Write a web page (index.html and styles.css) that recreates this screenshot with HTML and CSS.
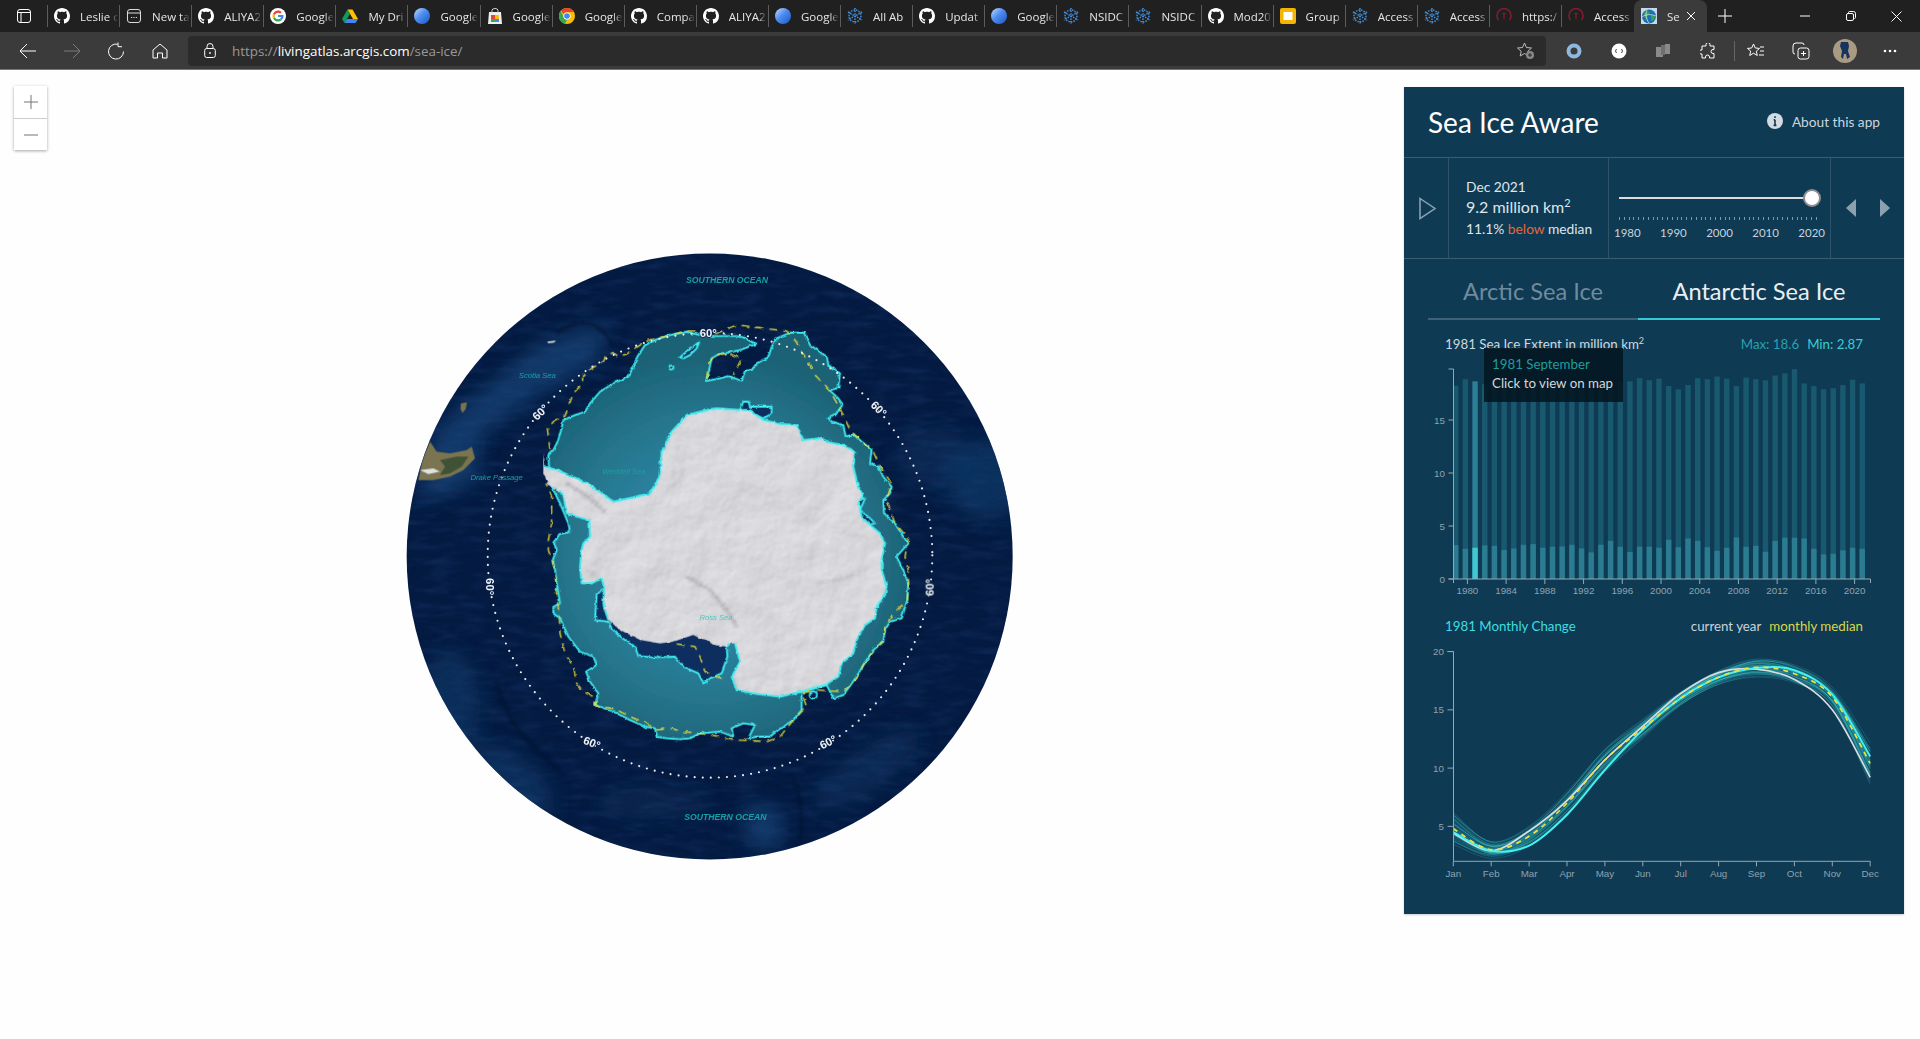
FILE: index.html
```html
<!DOCTYPE html>
<html lang="en">
<head>
  <meta charset="UTF-8" />
  <title>Sea Ice Aware</title>
  <link rel="stylesheet" href="styles.css">
</head>
<body>
  <svg class="icon-defs" aria-hidden="true">
    <defs>
      <symbol id="i-gh" viewBox="0 0 16 16"><path fill="#fff" d="M8 0C3.58 0 0 3.58 0 8c0 3.54 2.29 6.53 5.47 7.59.4.07.55-.17.55-.38 0-.19-.01-.82-.01-1.49-2.01.37-2.53-.49-2.69-.94-.09-.23-.48-.94-.82-1.13-.28-.15-.68-.52-.01-.53.63-.01 1.08.58 1.23.82.72 1.21 1.87.87 2.33.66.07-.52.28-.87.51-1.07-1.78-.2-3.64-.89-3.64-3.95 0-.87.31-1.59.82-2.15-.08-.2-.36-1.02.08-2.12 0 0 .67-.21 2.2.82.64-.18 1.32-.27 2-.27.68 0 1.36.09 2 .27 1.53-1.04 2.2-.82 2.2-.82.44 1.1.16 1.92.08 2.12.51.56.82 1.27.82 2.15 0 3.07-1.87 3.75-3.65 3.95.29.25.54.73.54 1.48 0 1.07-.01 1.93-.01 2.2 0 .21.15.46.55.38A8.013 8.013 0 0016 8c0-4.42-3.58-8-8-8z"/></symbol>
      <symbol id="i-new" viewBox="0 0 16 16"><rect x="1.5" y="1.5" width="13" height="13" rx="2.5" fill="none" stroke="#ddd"/><path d="M2 5h12" stroke="#ddd"/><path d="M5 9.500h1.200M7.400 9.500h1.200M9.800 9.500h1.200" stroke="#ddd"/></symbol>
      <symbol id="i-google" viewBox="0 0 16 16"><circle cx="8" cy="8" r="8" fill="#fff"/><path fill="#4285f4" d="M13.500 8.100c0-.4 0-.8-.1-1.100H8v2.100h3.100c-.1.700-.5 1.300-1.100 1.700l1.700 1.300c1-.9 1.800-2.300 1.800-4z"/><path fill="#34a853" d="M8 13.600c1.500 0 2.700-.5 3.700-1.400L10 10.800c-.5.300-1.200.5-2 .5-1.500 0-2.700-1-3.100-2.300l-1.800 1.400c.9 1.800 2.800 3.200 4.900 3.200z"/><path fill="#fbbc05" d="M4.900 9c-.2-.7-.2-1.400 0-2L3.100 5.600c-.8 1.500-.8 3.300 0 4.800z"/><path fill="#ea4335" d="M8 4.700c.8 0 1.600.3 2.200.9l1.600-1.600C10.800 3 9.500 2.400 8 2.400c-2.100 0-4 1.300-4.900 3.200L4.900 7C5.300 5.700 6.500 4.700 8 4.700z"/></symbol>
      <symbol id="i-drive" viewBox="0 0 16 16"><path fill="#ffc107" d="M5.500 1.500h5L16 11h-5z"/><path fill="#0f9d58" d="M5.500 1.500L0 11l2.500 4L8 6z"/><path fill="#4285f4" d="M5 11h11l-2.500 4h-11z"/></symbol>
      <symbol id="i-globe" viewBox="0 0 16 16"><defs><linearGradient id="g-blue" x1="0" y1="0" x2="1" y2="1"><stop offset="0" stop-color="#c6ddff"/><stop offset=".45" stop-color="#4d8df0"/><stop offset="1" stop-color="#1a56c4"/></linearGradient></defs><circle cx="8" cy="8" r="8" fill="url(#g-blue)"/></symbol>
      <symbol id="i-store" viewBox="0 0 16 16"><path fill="#eee" d="M2 4h12l1 12H1z"/><path d="M5 5V2.500a3 2 0 016 0V5" fill="none" stroke="#ccc"/><path fill="#ea4335" d="M4 7h4v4H4z"/><path fill="#fbbc05" d="M8 7h4v4H8z"/><path fill="#34a853" d="M4 11h4v3H4z"/><path fill="#4285f4" d="M8 11h4v3H8z"/></symbol>
      <symbol id="i-chrome" viewBox="0 0 16 16"><circle cx="8" cy="8" r="8" fill="#fbbc05"/><path fill="#ea4335" d="M8 0a8 8 0 017 4H8a4 4 0 00-3.500 2L2 2.500A8 8 0 018 0z"/><path fill="#34a853" d="M1.500 3l3 5.500A4 4 0 008 12l-2.300 3.700A8 8 0 011.500 3z"/><circle cx="8" cy="8" r="3.600" fill="#fff"/><circle cx="8" cy="8" r="2.800" fill="#4285f4"/></symbol>
      <symbol id="i-nsidc" viewBox="0 0 16 16"><g fill="none" stroke="#3f8fdc" stroke-width="1.500" stroke-dasharray="1.500 1.100"><path d="M8 0v16M1 4l14 8M15 4L1 12"/><circle cx="8" cy="8" r="6"/></g></symbol>
      <symbol id="i-red" viewBox="0 0 16 16"><path d="M2.500 12A7 7 0 1113.500 12" fill="none" stroke="#8e1b33" stroke-width="1.400"/><path d="M8 5v6M6.500 5.500h3" stroke="#8e1b33" stroke-width="1.200"/></symbol>
      <symbol id="i-group" viewBox="0 0 16 16"><rect width="16" height="16" rx="2" fill="#f4b400"/><rect x="3.500" y="4" width="9" height="8" fill="#fff"/></symbol>
      <symbol id="i-world" viewBox="0 0 16 16"><rect width="16" height="16" fill="#c6d9e8"/><circle cx="8" cy="8.500" r="7" fill="#1b6fb5"/><path fill="#3aa34a" d="M3 5l4-2 2 2-3 3 1 4-3-2zM10 7l4 1-1 4-3 1z"/><path d="M1 9c4-3 9-3 14-1M6 2c-2 4-1 9 2 13" fill="none" stroke="#e8f0e0" stroke-width=".7"/></symbol>
    </defs>
  </svg>

  <header class="chrome">
    <div class="tabstrip">
      <div class="strip-btn">
        <svg width="16" height="16" viewBox="0 0 16 16" class="line-icon"><rect x="1.500" y="1.500" width="13" height="13" rx="2.500"/><path d="M1.500 4.500h13M5 4.500v10"/></svg>
      </div>
      <div class="tab"><svg class="favicon"><use href="#i-gh"/></svg><span class="tab-title">Leslie c</span></div>
      <div class="tab"><svg class="favicon"><use href="#i-new"/></svg><span class="tab-title">New ta</span></div>
      <div class="tab"><svg class="favicon"><use href="#i-gh"/></svg><span class="tab-title">ALIYA2</span></div>
      <div class="tab"><svg class="favicon"><use href="#i-google"/></svg><span class="tab-title">Google</span></div>
      <div class="tab"><svg class="favicon"><use href="#i-drive"/></svg><span class="tab-title">My Dri</span></div>
      <div class="tab"><svg class="favicon"><use href="#i-globe"/></svg><span class="tab-title">Google</span></div>
      <div class="tab"><svg class="favicon"><use href="#i-store"/></svg><span class="tab-title">Google</span></div>
      <div class="tab"><svg class="favicon"><use href="#i-chrome"/></svg><span class="tab-title">Google</span></div>
      <div class="tab"><svg class="favicon"><use href="#i-gh"/></svg><span class="tab-title">Compa</span></div>
      <div class="tab"><svg class="favicon"><use href="#i-gh"/></svg><span class="tab-title">ALIYA2</span></div>
      <div class="tab"><svg class="favicon"><use href="#i-globe"/></svg><span class="tab-title">Google</span></div>
      <div class="tab"><svg class="favicon"><use href="#i-nsidc"/></svg><span class="tab-title">All Ab</span></div>
      <div class="tab"><svg class="favicon"><use href="#i-gh"/></svg><span class="tab-title">Updat</span></div>
      <div class="tab"><svg class="favicon"><use href="#i-globe"/></svg><span class="tab-title">Google</span></div>
      <div class="tab"><svg class="favicon"><use href="#i-nsidc"/></svg><span class="tab-title">NSIDC</span></div>
      <div class="tab"><svg class="favicon"><use href="#i-nsidc"/></svg><span class="tab-title">NSIDC</span></div>
      <div class="tab"><svg class="favicon"><use href="#i-gh"/></svg><span class="tab-title">Mod20</span></div>
      <div class="tab"><svg class="favicon"><use href="#i-group"/></svg><span class="tab-title">Group</span></div>
      <div class="tab"><svg class="favicon"><use href="#i-nsidc"/></svg><span class="tab-title">Access</span></div>
      <div class="tab"><svg class="favicon"><use href="#i-nsidc"/></svg><span class="tab-title">Access</span></div>
      <div class="tab"><svg class="favicon"><use href="#i-red"/></svg><span class="tab-title">https:/</span></div>
      <div class="tab"><svg class="favicon"><use href="#i-red"/></svg><span class="tab-title">Access</span></div>
      <div class="tab tab-active">
        <svg class="favicon"><use href="#i-world"/></svg><span class="tab-title tab-title-short">Se</span>
        <svg width="10" height="10" viewBox="0 0 10 10" class="line-icon tab-close"><path d="M1 1l8 8M9 1l-8 8"/></svg>
      </div>
      <svg width="14" height="14" viewBox="0 0 14 14" class="line-icon new-tab"><path d="M7 0v14M0 7h14"/></svg>
      <div class="win-btns">
        <svg width="10" height="10" viewBox="0 0 10 10" class="line-icon"><path d="M0 5h10"/></svg>
        <svg width="10" height="10" viewBox="0 0 10 10" class="line-icon"><rect x=".5" y="2.500" width="7" height="7" rx="1.500"/><path d="M2.500 2.500V1.500a1 1 0 011-1h4a2 2 0 012 2v4a1 1 0 01-1 1"/></svg>
        <svg width="11" height="11" viewBox="0 0 11 11" class="line-icon"><path d="M.5.500l10 10M10.500.500l-10 10"/></svg>
      </div>
    </div>
    <div class="toolbar">
      <div class="tool tool-nav"><svg width="18" height="16" viewBox="0 0 18 16" class="line-icon"><path d="M17 8H1M8 1L1 8l7 7"/></svg></div>
      <div class="tool tool-nav tool-off"><svg width="18" height="16" viewBox="0 0 18 16" class="line-icon"><path d="M1 8h16M10 1l7 7-7 7"/></svg></div>
      <div class="tool tool-nav"><svg width="18" height="18" viewBox="0 0 18 18" class="line-icon"><path d="M10.500 2.200A7.500 7.500 0 1016.500 9.500M11 .5v4.200H15"/></svg></div>
      <div class="tool tool-nav"><svg width="16" height="16" viewBox="0 0 16 16" class="line-icon"><path d="M1 7l7-6 7 6v8h-4.500v-5h-5v5H1z"/></svg></div>
      <div class="address">
        <svg width="12" height="15" viewBox="0 0 12 15" class="line-icon"><rect x=".7" y="5.500" width="10.600" height="9" rx="2"/><path d="M3 5.500V3.500a3 3 0 016 0v2"/><circle cx="6" cy="10" r=".6"/></svg>
        <span class="url">https://<b>livingatlas.arcgis.com</b>/sea-ice/</span>
        <svg class="fav-add" width="18" height="18" viewBox="0 0 18 18"><path class="star-line" d="M7.500 1l2 4.500 5 .5-3.700 3.300 1 4.900L7.500 11.500 3.200 14 4.200 9.300.5 6l5-.5z"/><circle cx="13" cy="13" r="4" fill="#888"/><path d="M13 11v4M11 13h4" stroke="#2b2b2b"/></svg>
      </div>
      <div class="tool-group">
        <div class="tool"><svg width="16" height="16" viewBox="0 0 16 16"><circle cx="8" cy="8" r="5.500" fill="none" stroke="#8fb8e0" stroke-width="4"/></svg></div>
        <div class="tool"><svg width="16" height="16" viewBox="0 0 16 16"><circle cx="8" cy="8" r="7.500" fill="#fff"/><path d="M5.500 6L4.500 8l1 2M10.500 6l1 2-1 2" fill="none" stroke="#444"/></svg></div>
        <div class="tool"><svg width="16" height="16" viewBox="0 0 16 16" fill="#8a8a8a"><rect x="1" y="4" width="7" height="10"/><rect x="6" y="2" width="4" height="10" fill="#6f6f6f"/><rect x="10" y="1" width="5" height="10"/></svg></div>
        <div class="tool"><svg width="16" height="16" viewBox="0 0 16 16" class="line-icon"><path d="M6 1.500a2 2 0 014 0V3h4v3.500h-1a2 2 0 000 4h1V15h-4.500v-1a2 2 0 00-4 0v1H2v-4H1a2 2 0 010-4h1V3h4z"/></svg></div>
        <span class="tool-sep"></span>
        <div class="tool"><svg width="18" height="16" viewBox="0 0 18 16" class="line-icon"><path d="M6.500 1l1.800 4 4.200.4-3.200 2.800 1 4.300-3.800-2.300L2.700 12.500l1-4.300L.5 5.400l4.200-.4zM13 4h4M13 8h4M12 12h5"/></svg></div>
        <div class="tool"><svg width="18" height="18" viewBox="0 0 18 18" class="line-icon"><path d="M3 12a2 2 0 01-2-2V4a3 3 0 013-3h6a2 2 0 012 2"/><rect x="6" y="6" width="11" height="11" rx="2.500"/><path d="M11.500 9v5M9 11.500h5"/></svg></div>
        <div class="tool"><span class="avatar"><svg width="24" height="24" viewBox="0 0 24 24"><circle cx="12" cy="12" r="12" fill="#a99a84"/><path fill="#17345e" d="M8 3h7l1 4-1 5 2 6-3 2-1-5h-2l-1 5-2-2 1-6-2-5z"/></svg></span></div>
        <div class="tool"><svg width="14" height="4" viewBox="0 0 14 4" fill="#fff"><circle cx="2" cy="2" r="1.300"/><circle cx="7" cy="2" r="1.300"/><circle cx="12" cy="2" r="1.300"/></svg></div>
      </div>
    </div>
  </header>

  <main class="stage">
    <div class="zoom-ctrl">
      <button class="zoom-btn"><svg width="14" height="14" viewBox="0 0 14 14"><path d="M7 0v14M0 7h14"/></svg></button>
      <button class="zoom-btn"><svg width="14" height="14" viewBox="0 0 14 14"><path d="M0 7h14"/></svg></button>
    </div>

    <!-- map traced at 3 units per pixel -->
    <svg class="map" viewBox="0 0 1860 1860">
      <defs>
        <clipPath id="globe"><circle cx="929" cy="949.500" r="909"/></clipPath>
        <radialGradient id="ice-fill" gradientUnits="userSpaceOnUse" cx="930" cy="950" r="620">
          <stop offset=".3" stop-color="#2c86a6"/>
          <stop offset=".65" stop-color="#27788f"/>
          <stop offset="1" stop-color="#1c6276"/>
        </radialGradient>
        <filter id="soft" x="-50%" y="-50%" width="200%" height="200%"><feGaussianBlur stdDeviation="30"/></filter>
        <filter id="soft-small" x="-20%" y="-20%" width="140%" height="140%"><feGaussianBlur stdDeviation="4"/></filter>
        <filter id="rough" x="-5%" y="-5%" width="110%" height="110%">
          <feTurbulence type="fractalNoise" baseFrequency=".07" numOctaves="2" seed="4"/>
          <feDisplacementMap in="SourceGraphic" scale="9" xChannelSelector="R" yChannelSelector="G"/>
        </filter>
        <filter id="grain" x="0" y="0" width="100%" height="100%" color-interpolation-filters="sRGB">
          <feTurbulence type="fractalNoise" baseFrequency=".012 .045" numOctaves="5" seed="11"/>
          <feColorMatrix values="0 0 0 0 .16  0 0 0 0 .32  0 0 0 0 .55  .5 0 0 0 -.2"/>
        </filter>
        <filter id="relief" x="0" y="0" width="100%" height="100%" color-interpolation-filters="sRGB">
          <feTurbulence type="fractalNoise" baseFrequency=".009" numOctaves="4" seed="9" result="n"/>
          <feDiffuseLighting in="n" surfaceScale="4" diffuseConstant="1.030" lighting-color="#e6e6ea" result="l"><feDistantLight azimuth="235" elevation="66"/></feDiffuseLighting>
          <feComposite in="l" in2="SourceGraphic" operator="in"/>
        </filter>
      </defs>

      <g clip-path="url(#globe)">
        <rect class="ocean" width="1860" height="1860"/>
        <g class="ocean-light" filter="url(#soft)">
          <path d="M100 570L250 450 420 310 620 240 600 360 400 470 240 590 230 730 50 790z"/>
          <ellipse cx="1600" cy="650" rx="110" ry="90" opacity=".45"/>
          <ellipse cx="1760" cy="720" rx="120" ry="120" opacity=".7"/>
          <ellipse cx="150" cy="1400" rx="90" ry="170" opacity=".6"/>
          <ellipse cx="340" cy="1620" rx="150" ry="70" opacity=".65" transform="rotate(40 340 1620)"/>
          <ellipse cx="1090" cy="1760" rx="60" ry="70"/>
          <ellipse cx="1400" cy="1590" rx="190" ry="60" opacity=".5" transform="rotate(-35 1400 1590)"/>
          <ellipse cx="760" cy="1690" rx="170" ry="50" opacity=".35"/>
        </g>
        <rect width="1860" height="1860" filter="url(#grain)"/>
        <g class="trench" filter="url(#soft-small)">
          <path d="M470 280C520 240 600 230 640 320"/>
          <path d="M290 1330C320 1450 390 1520 480 1590"/>
          <path d="M1170 1600C1200 1650 1210 1720 1200 1790"/>
        </g>
        <path class="south-america" d="M90 605L110 635 150 640 200 630 215 620 225 655 190 690 150 710 100 720 55 720 65 670 75 640z"/>
        <path class="forest" d="M120 660L170 650 205 650 185 680 150 700 120 705 135 680z"/>
        <path class="snow" d="M60 690L100 685 120 695 85 702z"/>
        <path class="south-america" d="M183 490l18-3-4 20-10 12-6-14z"/>
        <path class="snow" d="M442 305l26-3-6 6-18 1z"/>
      </g>

      <g filter="url(#rough)">
        <path class="ice" d="M445 645L460 630 475 600 482 575 490 540 525 525 555 515 570 490 600 455 640 430 685 410 700 380 712 350 735 315 770 298 810 285 860 275 900 285 950 288 1010 288 1030 292 1068 312 1020 330 985 338 960 340 935 355 925 400 918 423 960 415 985 408 1025 422 1035 392 1055 390 1070 370 1105 352 1115 320 1130 295 1170 278 1212 278 1220 295 1230 315 1245 325 1280 350 1285 375 1320 400 1315 445 1288 450 1315 475 1327 492 1320 510 1285 535 1295 545 1330 555 1337 590 1360 583 1385 605 1415 630 1410 670 1435 680 1450 710 1475 740 1470 760 1450 780 1452 820 1485 850 1510 890 1525 910 1490 950 1510 990 1525 1030 1522 1080 1505 1135 1470 1145 1455 1170 1450 1205 1420 1230 1390 1275 1370 1310 1330 1365 1300 1375 1280 1335 1205 1355 1205 1410 1180 1440 1135 1470 1110 1490 1070 1490 1045 1495 1065 1455 1030 1450 995 1465 1000 1490 960 1475 900 1480 870 1495 840 1498 800 1495 770 1490 765 1465 735 1460 690 1440 640 1415 585 1395 595 1360 570 1325 558 1295 590 1275 580 1250 540 1235 505 1190 480 1135 460 1120 460 1100 480 1090 470 1030 465 990 458 960 470 930 462 910 478 882 510 876 505 850 480 790 450 730z"/>
        <path class="gap" d="M610 1045L590 1065 585 1140 625 1145 635 1165 660 1190 705 1220 715 1248 760 1252 825 1250 850 1280 895 1300 910 1330 930 1315 965 1300 982 1250 980 1220 1000 1200 900 1100 700 1060z"/>
        <path class="gap" d="M1020 510L1030 485 1045 485 1050 500 1115 500 1115 520 1090 535 1050 520z"/>
        <path class="gap" d="M840 352L860 335 880 320 898 305 890 325 870 345 850 355z"/>
        <path class="gap" d="M808 385a6 5 0 0112-5 6 5 0 01-12 5z"/>
        <path class="gap" d="M1375 770L1395 775 1380 810 1410 835 1425 850 1405 855 1380 830z"/>
        <path class="land" filter="url(#relief)" d="M430 640L435 680 470 690 530 715 570 735 640 785 700 772 750 760 778 710 785 635 815 575 860 525 930 508 950 505 1020 510 1050 510 1090 540 1140 552 1190 555 1210 600 1260 595 1300 610 1330 615 1365 635 1360 680 1375 745 1390 765 1375 790 1385 830 1410 855 1440 880 1455 910 1445 960 1445 990 1460 1040 1455 1065 1430 1100 1425 1135 1395 1155 1370 1200 1360 1240 1325 1270 1315 1310 1275 1335 1240 1345 1205 1355 1140 1370 1070 1362 1010 1350 995 1310 1020 1265 1005 1210 985 1210 980 1220 940 1215 920 1200 900 1195 880 1185 820 1205 780 1210 720 1200 660 1170 625 1140 610 1095 612 1040 605 1015 575 1030 545 1030 540 980 545 930 550 910 570 890 568 840 530 830 500 820 490 765 475 750 445 735 430 700z"/>
        <g class="ridge" filter="url(#soft-small)">
          <path d="M860 1010L930 1050 980 1110 1010 1160"/>
          <path d="M500 730L570 775 620 820"/>
          <path d="M1250 1030L1320 1020 1365 1000" opacity=".5"/>
          <path d="M560 990L590 1010 600 1070" opacity=".4"/>
          <path d="M1010 1350L1000 1300" opacity=".5"/>
        </g>
        <path class="coast" d="M435 680L470 690 530 715 570 735 640 785 700 772 750 760 778 710 785 635 815 575 860 525 930 508 950 505 1020 510 1050 510 1090 540 1140 552 1190 555 1210 600 1260 595 1300 610 1330 615 1365 635 1360 680 1375 745 1390 765 1375 790 1385 830 1410 855 1440 880 1455 910 1445 960 1445 990 1460 1040 1455 1065 1430 1100 1425 1135 1395 1155 1370 1200 1360 1240 1325 1270 1315 1310 1275 1335 1240 1345 1205 1355 1140 1370 1070 1362 1010 1350 995 1310 1020 1265 1005 1210"/>
        <path class="coast" d="M625 1140L610 1095 612 1040 605 1015 575 1030 545 1030 540 980 545 930 550 910 570 890 568 840 530 830 500 820 490 765 475 750"/>
        <circle class="coast" cx="1240" cy="1365" r="11"/>
        <path class="median" d="M450 630L442 565 465 540 495 528 520 460 548 430 548 408 575 385 610 365 620 345 640 338 655 350 680 342 740 302 810 285 860 273 900 273 950 280 1010 255 1070 262 1160 273 1185 300 1215 350 1245 405 1280 440 1300 470 1330 525 1350 570 1390 610 1420 635 1440 680 1475 730 1460 780 1485 850 1525 895 1515 950 1525 990 1525 1030 1522 1080 1480 1120 1455 1160 1450 1200 1420 1235 1390 1275 1370 1315 1330 1355 1250 1350 1205 1360 1220 1400 1180 1440 1140 1490 1100 1505 1050 1502 1010 1500 960 1490 900 1480 850 1475 810 1465 770 1470 740 1450 690 1430 640 1405 590 1400 580 1370 550 1355 530 1330 520 1280 495 1240 480 1180 478 1130 470 1060 465 990 445 930 445 900 455 850 455 770 438 730"/>
        <path class="median" d="M920 415L925 370 945 345 985 340 1025 355 1000 405"/>
        <path class="median" d="M830 1212L885 1220 900 1250 915 1295 940 1308 965 1315"/>
      </g>

      <circle class="parallel" cx="930" cy="946" r="667"/>
      <g class="map-labels">
        <text class="deg" x="925" y="291">60°</text>
        <text class="deg" transform="translate(422 518) rotate(-45)" y="10">60°</text>
        <text class="deg" transform="translate(1435 508) rotate(45)" y="10">60°</text>
        <text class="deg" transform="translate(268 1040) rotate(90)" y="10">60°</text>
        <text class="deg" transform="translate(1590 1042) rotate(-90)" y="10">60°</text>
        <text class="deg" transform="translate(575 1510) rotate(22)" y="10">60°</text>
        <text class="deg" transform="translate(1285 1508) rotate(-27)" y="10">60°</text>
        <text class="ocean-name" x="981" y="128">SOUTHERN OCEAN</text>
        <text class="ocean-name" x="976" y="1739">SOUTHERN OCEAN</text>
        <text class="sea-name" x="412" y="414">Scotia Sea</text>
        <text class="sea-name" x="672" y="703">Weddell Sea</text>
        <text class="sea-name" x="290" y="720">Drake Passage</text>
        <text class="sea-name sea-name-light" x="948" y="1140">Ross Sea</text>
      </g>
    </svg>

    <aside class="panel">
      <div class="panel-head">
        <h1 class="app-title">Sea Ice Aware</h1>
        <a class="about">
          <svg width="16" height="16" viewBox="0 0 16 16"><circle cx="8" cy="8" r="8" fill="#d3dbe2"/><path d="M8 3.200v1.800M8 6.800v5.600M6.700 6.900H8M6.600 12.400h2.800" stroke="#0e3a54" stroke-width="1.600"/></svg>
          About this app
        </a>
      </div>

      <div class="controls">
        <div class="play-cell">
          <svg width="18" height="23" viewBox="0 0 18 23"><path d="M1 1.500l15 10-15 10z" fill="none" stroke="#8ea5b4" stroke-width="1.500"/></svg>
        </div>
        <div class="info-cell">
          <div class="info-date">Dec 2021</div>
          <div class="info-value">9.2 million km<sup>2</sup></div>
          <div class="info-diff">11.1% <span class="below">below</span> median</div>
        </div>
        <div class="slider-cell">
          <div class="slider-track"><span class="slider-knob"></span></div>
          <div class="slider-ticks"></div>
          <div class="slider-years"><span>1980</span><span>1990</span><span>2000</span><span>2010</span><span>2020</span></div>
        </div>
        <div class="step-cell">
          <svg width="10" height="18" viewBox="0 0 10 18"><path d="M10 0v18L0 9z" fill="#8ba1b0"/></svg>
          <svg width="10" height="18" viewBox="0 0 10 18"><path d="M0 0v18l10-9z" fill="#8ba1b0"/></svg>
        </div>
      </div>

      <div class="region-tabs">
        <div class="region-tab">Arctic Sea Ice</div>
        <div class="region-tab region-tab-on">Antarctic Sea Ice</div>
      </div>

      <section class="chart-block">
        <div class="chart-head">
          <span class="chart-title">1981 Sea Ice Extent in million km<sup>2</sup></span>
          <span><span class="stat-max">Max: 18.6</span><span class="stat-min">Min: 2.87</span></span>
        </div>
        <svg id="barChart" class="chart" viewBox="0 0 500 242"></svg>
        <div class="tooltip">
          <div class="tooltip-title">1981 September</div>
          <div>Click to view on map</div>
        </div>
      </section>

      <section class="chart-block">
        <div class="chart-head">
          <span class="chart-title-cyan">1981 Monthly Change</span>
          <span><span class="key-current">current year</span><span class="key-median">monthly median</span></span>
        </div>
        <svg id="lineChart" class="chart chart-line" viewBox="0 0 500 248"></svg>
      </section>
    </aside>
  </main>

  <script src="script.js"></script>
</body>
</html>
```

FILE: styles.css
```css
* { box-sizing: border-box; }
html, body { height: 100%; }
body {
  margin: 0;
  overflow: hidden;
  background: #fefefe;
  font-family: Lato, "Open Sans", sans-serif;
}
.icon-defs { position: absolute; width: 0; height: 0; }
.line-icon { fill: none; stroke: #fff; stroke-width: 1; }

/* browser frame */
.chrome { height: 70px; background: #3b3b3b; border-bottom: 1px solid #777; }
.tabstrip {
  display: flex;
  align-items: center;
  height: 32px;
  background: #202020;
  font-family: "Open Sans", sans-serif;
  font-size: 11.500px;
  color: #e6e6e6;
}
.strip-btn { display: flex; justify-content: center; width: 47px; }
.tab {
  display: flex;
  align-items: center;
  flex: none;
  width: 72.1px;
  height: 22px;
  padding-left: 6px;
  border-left: 1px solid #5c5c5c;
}
.favicon { flex: none; width: 16px; height: 16px; margin-right: 10px; }
.tab-title {
  flex: none;
  width: 38px;
  white-space: nowrap;
  -webkit-mask-image: linear-gradient(90deg, #000 75%, transparent);
  mask-image: linear-gradient(90deg, #000 75%, transparent);
}
.tab-active {
  width: 73px;
  height: 32px;
  margin-left: 1px;
  padding-left: 7px;
  padding-right: 8px;
  background: #3b3b3b;
  border: 0;
  border-radius: 8px 8px 0 0;
}
.tab-title-short { width: 15px; }
.tab-close { flex: none; margin-left: 4px; }
.new-tab { flex: none; margin-left: 11px; }
.win-btns {
  display: flex;
  align-items: center;
  justify-content: space-between;
  width: 102px;
  margin-left: 68px;
}

.toolbar { display: flex; align-items: center; height: 37px; padding-left: 6px; }
.tool { display: flex; align-items: center; justify-content: center; flex: none; width: 44.500px; height: 30px; }
.tool-nav { width: 44px; }
.tool-off .line-icon { stroke: #7b7b7b; }
.tool-group { display: flex; align-items: center; margin-left: 6px; }
.tool-sep { width: 1px; height: 20px; margin: 0 -1px 0 4px; background: #666; }
.address {
  display: flex;
  align-items: center;
  flex: none;
  width: 1358px;
  height: 30px;
  margin-left: 6px;
  padding: 0 10px 0 16px;
  background: #2b2b2b;
  border-radius: 4px;
}
.url {
  margin-left: 16px;
  font-family: "Open Sans", sans-serif;
  font-size: 13.400px;
  color: #9a9a9a;
}
.url b { font-weight: 400; color: #fff; }
.fav-add { margin-left: auto; margin-right: 1px; }
.star-line { fill: none; stroke: #bbb; }
.avatar { display: block; width: 24px; height: 24px; }

/* page */
.stage { display: flex; align-items: flex-start; padding: 17px 16px 0 14px; }
.zoom-ctrl {
  flex: none;
  width: 33px;
  margin-top: -1px;
  background: #fff;
  box-shadow: 0 1px 3px rgba(0,0,0,.35);
}
.zoom-btn {
  display: flex;
  align-items: center;
  justify-content: center;
  width: 33px;
  height: 32px;
  padding: 0;
  border: 0;
  background: #fff;
}
.zoom-btn + .zoom-btn { border-top: 1px solid #ccc; }
.zoom-btn path { stroke: #7a7270; fill: none; }

/* map */
.map { flex: none; width: 620px; height: 620px; margin: 153px 0 0 353px; }
.ocean { fill: #041a41; }
.ocean-light { fill: #124274; opacity: .8; }
.trench { fill: none; stroke: #021231; stroke-width: 7; }
.south-america { fill: #7b7450; }
.forest { fill: #3f5236; }
.snow { fill: #dfe3e0; }
.ice { fill: url(#ice-fill); stroke: #3ff0f2; stroke-width: 5.500; stroke-linejoin: round; }
.gap { fill: #0b2d5e; stroke: #3ff0f2; stroke-width: 5.500; stroke-linejoin: round; }
.land { fill: #ddd; }
.ridge { fill: none; stroke: #6a6a73; stroke-width: 9; stroke-dasharray: 9 6; opacity: .55; }
.coast { fill: none; stroke: #3ff0f2; stroke-width: 5.500; stroke-linejoin: round; }
.median { fill: none; stroke: #f0e23c; stroke-width: 3.800; stroke-dasharray: 24 18; }
.parallel { fill: none; stroke: #ececec; stroke-width: 6.500; stroke-linecap: round; stroke-dasharray: 0 24.300; }
.map-labels text { text-anchor: middle; font-family: "Liberation Sans", Arial, sans-serif; }
.deg { font-size: 34px; font-weight: 700; fill: #f4f4f4; stroke: #0a2550; stroke-width: 5px; paint-order: stroke; }
.ocean-name { font-size: 26px; font-weight: 700; font-style: italic; fill: #18a0a0; }
.sea-name { font-size: 23px; font-style: italic; fill: #18a0a0; }
.sea-name-light { fill: #49c9c4; }

/* side panel */
.panel {
  flex: none;
  width: 500px;
  height: 827px;
  margin-left: 384px;
  background: #0e3a54;
  color: #d8dfe4;
  box-shadow: 0 1px 2px rgba(0,0,0,.2);
}
.panel-head {
  display: flex;
  align-items: center;
  justify-content: space-between;
  height: 71px;
  padding: 0 24px;
  border-bottom: 1px solid #3b5d73;
}
.app-title { margin: 0 0 1px; font-size: 28px; font-weight: 400; color: #fff; }
.about { display: flex; align-items: center; gap: 9px; margin-top: -2px; font-size: 13.700px; color: #ccd5dc; }

.controls { display: flex; height: 101px; border-bottom: 1px solid #3b5d73; }
.play-cell {
  display: flex;
  align-items: center;
  justify-content: center;
  flex: none;
  width: 45px;
  padding-left: 3px;
  border-right: 1px solid #2f5369;
}
.info-cell {
  flex: none;
  width: 160px;
  padding: 18px 0 0 17px;
  border-right: 1px solid #2f5369;
  font-size: 13.800px;
  line-height: 21px;
  color: #dfe5e9;
}
.info-value { font-size: 16px; height: 21px; margin-bottom: 1px; margin-top: -1px; }
.info-value sup, .chart-title sup { font-size: .68em; line-height: 0; }
.below { color: #e2693f; }
.slider-cell {
  flex: none;
  width: 222px;
  padding: 39px 5px 0 5px;
  border-right: 1px solid #2f5369;
}
.slider-track { position: relative; height: 2px; margin: 0 12px 0 5px; background: #ddd; }
.slider-knob {
  position: absolute;
  right: -8px;
  top: -8px;
  width: 18px;
  height: 18px;
  background: #fff;
  border: 2px solid #8d8d8d;
  border-radius: 50%;
}
.slider-ticks {
  height: 3px;
  margin: 18px 8px 0 5px;
  background: repeating-linear-gradient(90deg, #7f98a8 0 1px, transparent 1px 4.800px);
}
.slider-years { display: flex; justify-content: space-between; margin-top: 6px; font-size: 11.500px; color: #c9d2d9; }
.step-cell { display: flex; align-items: center; justify-content: center; gap: 24px; flex: 1; padding-left: 1px; }

.region-tabs { display: flex; height: 61px; margin: 0 24px; }
.region-tab {
  display: flex;
  align-items: center;
  justify-content: center;
  width: 210px;
  padding-top: 4px;
  border-bottom: 2px solid #3f6077;
  font-size: 23.600px;
  color: #6f8b9c;
}
.region-tab-on { flex: 1; border-bottom-color: #37c9d3; color: #e9eef1; }

.chart-block { position: relative; }
.chart-head {
  display: flex;
  align-items: center;
  justify-content: space-between;
  height: 20px;
  margin-top: 14px;
  padding: 0 41px 1px;
  font-size: 13.300px;
  color: #cfd8de;
}
.chart-block + .chart-block .chart-head { margin-top: 16px; }
.chart { display: block; width: 500px; height: 242px; margin-top: 4px; }
.chart-line { height: 248px; margin-top: 6px; }
.stat-max { color: #2aa0af; margin-right: 8px; }
.stat-min { color: #3bcdd2; }
.chart-title-cyan { color: #3fdde0; }
.key-current { color: #c9d2d8; margin-right: 8px; }
.key-median { color: #d8d848; }
.tooltip {
  position: absolute;
  left: 80px;
  top: 14px;
  width: 139px;
  height: 54px;
  padding: 7px 8px;
  background: rgba(3,22,32,.88);
  font-size: 13.300px;
  line-height: 19px;
  white-space: nowrap;
  color: #d3d7da;
}
.tooltip-title { color: #1f9e9f; }

.axis { stroke: #93a8b5; fill: none; stroke-width: 1; }
.axis-label { font-family: "Liberation Sans", Arial, sans-serif; font-size: 9.800px; fill: #8ea2af; }
.bar-max { fill: #19596f; }
.bar-min { fill: #2b7c91; }
.bar-max-on { fill: #2b8096; }
.bar-min-on { fill: #40c8d2; }
.line-year { fill: none; stroke: #3fd6d8; stroke-width: 1; opacity: .2; }
.line-picked { fill: none; stroke: #41f2f0; stroke-width: 2; }
.line-current { fill: none; stroke: #d9dde0; stroke-width: 1.700; }
.line-median { fill: none; stroke: #f0e23c; stroke-width: 1.700; stroke-dasharray: 5 5; }
```

FILE: script.js
```js
const NS = "http://www.w3.org/2000/svg";

function add(parent, tag, attrs, text) {
  const el = document.createElementNS(NS, tag);
  for (const key in attrs) el.setAttribute(key, attrs[key]);
  if (text !== undefined) el.textContent = text;
  parent.appendChild(el);
  return el;
}

// yearly maximum and minimum extent, 1979 to 2021
const maxVals = [18.25,18.85,18.65,18.37,18.6,18.35,18.4,17.74,18.0,18.6,18.75,18.4,18.4,18.0,18.0,18.3,18.4,18.6,18.65,18.95,18.75,18.9,18.2,17.9,18.3,18.95,18.85,19.1,18.9,18.2,19,18.85,18.75,19.2,19.4,19.8,18.45,18.2,17.9,18,18.3,18.8,18.45];
const minVals = [3.2,2.85,2.95,3.17,3.13,2.73,2.88,3.23,3.29,2.95,3.04,3.07,3.23,2.88,2.51,3.23,3.6,3.04,2.54,3.04,3.04,2.95,3.7,3.0,3.82,3.6,3.0,2.66,2.95,3.92,3.04,3.13,2.57,3.6,3.89,3.89,3.82,2.85,2.32,2.38,2.7,2.95,2.85];

function renderBars() {
  const svg = document.getElementById("barChart");
  const base = 221, unit = 10.6;
  maxVals.forEach((val, i) => {
    const x = 49 + i * 9.68;
    const on = i === 2;
    add(svg, "rect", { x, y: base - val * unit, width: 5.4, height: val * unit, class: on ? "bar-max-on" : "bar-max" });
    add(svg, "rect", { x, y: base - minVals[i] * unit, width: 5.4, height: minVals[i] * unit, class: on ? "bar-min-on" : "bar-min" });
  });
  add(svg, "path", { class: "axis", d: `M44.500 11H49.500V${base}M44.500 ${base}H466.500v4M49.500 ${base}v4` });
  [0, 5, 10, 15].forEach(val => {
    const y = base - val * unit;
    add(svg, "path", { class: "axis", d: `M44.500 ${y}H49.500` });
    add(svg, "text", { class: "axis-label", x: 41, y: y + 3.5, "text-anchor": "end" }, val);
  });
  for (let year = 1980; year <= 2020; year += 4) {
    const x = 63.4 + (year - 1980) * 9.68;
    add(svg, "path", { class: "axis", d: `M${x} ${base}v5` });
    add(svg, "text", { class: "axis-label", x, y: base + 15, "text-anchor": "middle" }, year);
  }
}

const months = ["Jan","Feb","Mar","Apr","May","Jun","Jul","Aug","Sep","Oct","Nov","Dec"];
const median = [4.8,3.0,4.15,7.0,10.7,13.4,16,17.8,18.65,18.1,16.1,10.4];
const picked = [4.5,2.9,3.35,6,9.85,13.3,16,17.8,18.6,18.4,16.3,11];
const current = [4.4,2.9,4.6,7.2,10.7,13.6,16.4,18.2,18.5,17.6,15,9.2];
const spread = [1.6,.8,.9,1.1,1.1,.9,.7,.7,.9,.9,.9,1.9];

function curve(vals) {
  const pts = vals.map((v, i) => [49.3 + i * 37.9, 219.3 - (v - 2) * 11.65]);
  let d = `M${pts[0][0]} ${pts[0][1]}`;
  for (let i = 0; i < pts.length - 1; i++) {
    const p0 = pts[Math.max(i - 1, 0)], p1 = pts[i], p2 = pts[i + 1], p3 = pts[Math.min(i + 2, pts.length - 1)];
    const c1 = [p1[0] + (p2[0] - p0[0]) / 6, p1[1] + (p2[1] - p0[1]) / 6];
    const c2 = [p2[0] - (p3[0] - p1[0]) / 6, p2[1] - (p3[1] - p1[1]) / 6];
    d += `C${c1[0]} ${c1[1]} ${c2[0]} ${c2[1]} ${p2[0]} ${p2[1]}`;
  }
  return d;
}

function renderLines() {
  const svg = document.getElementById("lineChart");
  const base = 219.3;
  for (let y = 0; y < 40; y++) {
    const vals = median.map((v, m) => v + spread[m] * Math.sin(y * 2.399 + m * .35) * (0.3 + (y * 7 % 10) / 14));
    add(svg, "path", { class: "line-year", d: curve(vals) });
  }
  add(svg, "path", { class: "line-current", d: curve(current) });
  add(svg, "path", { class: "line-picked", d: curve(picked) });
  add(svg, "path", { class: "line-median", d: curve(median) });
  add(svg, "path", { class: "axis", d: `M43.500 9.500H49.500V${base}H466.300` });
  [5, 10, 15, 20].forEach(val => {
    const y = base - (val - 2) * 11.65;
    add(svg, "path", { class: "axis", d: `M43.500 ${y}H49.500` });
    add(svg, "text", { class: "axis-label", x: 40, y: y + 3.5, "text-anchor": "end" }, val);
  });
  months.forEach((name, i) => {
    const x = 49.3 + i * 37.9;
    add(svg, "path", { class: "axis", d: `M${x} ${base}v5` });
    add(svg, "text", { class: "axis-label", x, y: base + 16, "text-anchor": "middle" }, name);
  });
}

renderBars();
renderLines();
```
